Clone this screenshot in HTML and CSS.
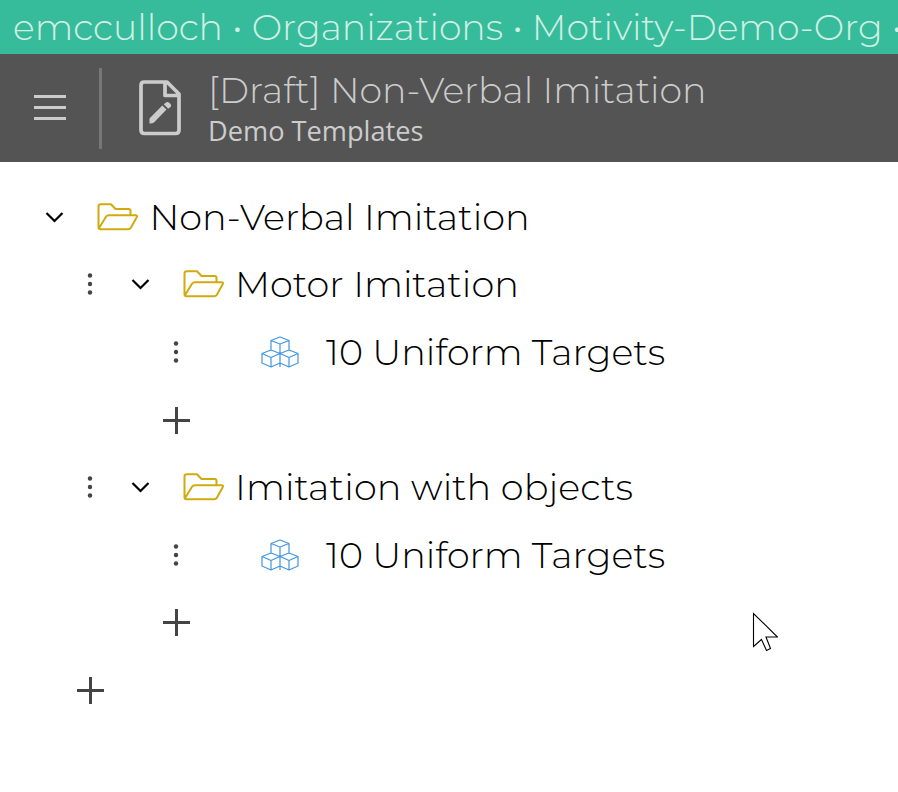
FILE: index.html
```
<!DOCTYPE html>
<html lang="en">
<head>
    <meta charset="UTF-8">
    <meta name="viewport" content="width=device-width, initial-scale=1.0">
    <title>[Draft] Non-Verbal Imitation</title>
    <link rel="stylesheet" href="styles.css">
</head>
<body>
    <svg class="icon-defs">
        <symbol id="chevron" viewBox="0 0 20 12">
            <path d="M1.500 2l8 8 8-8" fill="none" stroke="#000" stroke-width="2.200"/>
        </symbol>
        <symbol id="folder" viewBox="0 0 42 28">
            <path d="M1.5 24V3.5Q1.5 1.200 3.800 1.200H14L18.500 6H31.500Q33.500 6 33.500 8V12.300M1.800 25.500L9 13.800Q10 12.300 11.800 12.300H38.500Q40.800 12.300 39.700 14.300L34 24.500Q33 26.300 31 26.300H3.500Q1.500 26.300 1.500 24" fill="none" stroke="#d1aa10" stroke-width="2" stroke-linejoin="round"/>
        </symbol>
        <symbol id="dots" viewBox="0 0 6 22">
            <g fill="#444">
                <circle cx="3" cy="2.500" r="2.200"/>
                <circle cx="3" cy="11" r="2.200"/>
                <circle cx="3" cy="19.500" r="2.200"/>
            </g>
        </symbol>
        <symbol id="cubes" viewBox="0 0 38 32">
            <path d="M10 4.500L19 1l9 3.500v9.500l-9 3.500-9-3.500zM10 4.500L19 8l9-3.500M19 8v23M1 17.500l9-3.500 9 3.500v9.500l-9 4-9-4zM1 17.500l9 4 9-4M10 21.500V31M19 17.500l9-3.500 9 3.500v9.500l-9 4-9-4zM19 17.500l9 4 9-4M28 21.500V31" fill="none" stroke="#4296df" stroke-width="1.200" stroke-linejoin="round"/>
        </symbol>
        <symbol id="plus" viewBox="0 0 28 28">
            <path d="M0 14.500h27M13.500 1v27" fill="none" stroke="#444" stroke-width="3"/>
        </symbol>
    </svg>

    <nav class="breadcrumb">emcculloch • Organizations • Motivity-Demo-Org •</nav>

    <header class="header">
        <div class="menu">
            <span></span>
            <span></span>
            <span></span>
        </div>
        <div class="divider"></div>
        <svg class="doc-icon" viewBox="0 0 42 56">
            <path d="M5 2H28L40 14V50Q40 53.500 36.500 53.500H5.500Q2 53.500 2 50V5.500Q2 2 5 2M26 2V15.500H40" fill="none" stroke="#ccc" stroke-width="3.700" stroke-linejoin="round"/>
            <path d="M10.500 43.500V38.500L23.300 25.500 27.500 29.500 15 42.500Q13.500 43.700 10.500 43.500M24.800 24.300L27 22.500Q28.500 21.200 30.800 23.200Q33 25.500 31.500 27L29.200 28.800z" fill="#ccc"/>
        </svg>
        <div class="titles">
            <h1>[Draft] Non-Verbal Imitation</h1>
            <p>Demo Templates</p>
        </div>
    </header>

    <main class="tree">
        <div class="row">
            <svg class="chevron"><use href="#chevron"/></svg>
            <svg class="folder"><use href="#folder"/></svg>
            <span class="label">Non-Verbal Imitation</span>
        </div>
        <div class="children">
            <div class="row">
                <svg class="dots"><use href="#dots"/></svg>
                <svg class="chevron"><use href="#chevron"/></svg>
                <svg class="folder"><use href="#folder"/></svg>
                <span class="label">Motor Imitation</span>
            </div>
            <div class="children">
                <div class="row">
                    <svg class="dots"><use href="#dots"/></svg>
                    <svg class="cubes"><use href="#cubes"/></svg>
                    <span class="label targets">10 Uniform Targets</span>
                </div>
                <div class="row">
                    <svg class="plus"><use href="#plus"/></svg>
                </div>
            </div>
            <div class="row">
                <svg class="dots"><use href="#dots"/></svg>
                <svg class="chevron"><use href="#chevron"/></svg>
                <svg class="folder"><use href="#folder"/></svg>
                <span class="label objects">Imitation with objects</span>
            </div>
            <div class="children">
                <div class="row">
                    <svg class="dots"><use href="#dots"/></svg>
                    <svg class="cubes"><use href="#cubes"/></svg>
                    <span class="label targets">10 Uniform Targets</span>
                </div>
                <div class="row">
                    <svg class="plus"><use href="#plus"/></svg>
                </div>
            </div>
            <div class="row">
                <svg class="plus"><use href="#plus"/></svg>
            </div>
        </div>
    </main>

    <svg class="cursor" viewBox="0 0 26 40">
        <path d="M1.500 1.500V34.500L9.500 27.500L14.500 38.500L18.500 36.500L14 25H25.500z" fill="#fff" stroke="#000" stroke-width="1.100"/>
    </svg>
</body>
</html>
```
FILE: styles.css
```
* {
    box-sizing: border-box;
}
body {
    margin: 0;
    height: 792px;
    overflow: hidden;
    background: #fff;
    color: #000;
    font-family: Montserrat, Inter, sans-serif;
}
svg {
    display: block;
    flex: none;
}
.icon-defs {
    display: none;
}

.breadcrumb {
    height: 54px;
    padding-left: 13px;
    background: #36bc9b;
    color: #d2efe5;
    font-size: 36.25px;
    font-weight: 300;
    line-height: 54px;
    white-space: nowrap;
    overflow: hidden;
}

.header {
    display: flex;
    align-items: flex-start;
    height: 108px;
    padding: 14px 0 0 34px;
    background: #545454;
    color: #ccc;
}
.menu {
    display: flex;
    flex-direction: column;
    gap: 8px;
    width: 32px;
    margin-top: 27px;
}
.menu span {
    height: 3px;
    background: #ccc;
}
.divider {
    width: 3px;
    height: 81px;
    margin-left: 33px;
    background: #777;
}
.doc-icon {
    width: 42px;
    height: 56px;
    margin: 12px 0 0 37px;
}
.titles {
    margin-left: 27px;
}
.titles h1 {
    margin: 0;
    font-size: 36.3px;
    font-weight: 300;
    line-height: 45px;
    white-space: nowrap;
}
.titles p {
    margin: 0;
    font-family: "Open Sans", sans-serif;
    font-size: 27.2px;
    line-height: 36px;
}

.tree {
    padding: 21px 0 0 45px;
}
.row {
    display: flex;
    align-items: center;
    height: 67.6px;
}
.children {
    padding-left: 41px;
}
.children .children {
    padding-left: 86px;
}
.chevron {
    width: 20px;
    height: 12px;
}
.folder {
    width: 42px;
    height: 28px;
    margin-left: 32px;
}
.dots {
    width: 6px;
    height: 22px;
    margin-left: 1px;
}
.dots + .chevron {
    margin-left: 37.5px;
}
.cubes {
    width: 38px;
    height: 32px;
    margin-left: 82px;
}
.plus {
    width: 28px;
    height: 28px;
    margin-left: -9px;
}
.label {
    margin-left: 10.5px;
    font-size: 36.65px;
    font-weight: 300;
    white-space: nowrap;
}
.targets {
    margin-left: 27px;
    font-size: 36.5px;
}
.objects {
    letter-spacing: 0.1px;
}

.cursor {
    position: absolute;
    left: 752px;
    top: 612px;
    width: 26px;
    height: 40px;
}
```
